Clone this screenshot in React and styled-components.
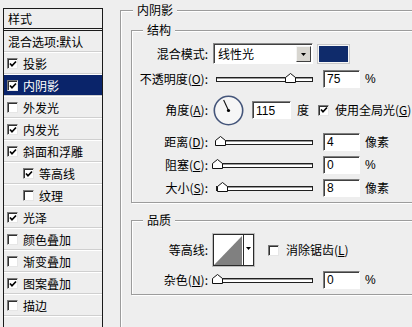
import React from 'react';
import styled, { createGlobalStyle } from 'styled-components';

const Global = createGlobalStyle`
  html, body { margin: 0; padding: 0; background: #eeeeee; }
  body {
    font-family: "Noto Sans CJK SC", "Liberation Sans", sans-serif;
    font-size: 12px;
    color: #000;
  }
  u { text-decoration: underline; text-underline-offset: 1px; }
`;

const Page = styled.div`
  width: 412px;
  height: 327px;
  overflow: hidden;
  display: flex;
  align-items: flex-start;
  background: #eeeeee;
`;

/* ---------- left list ---------- */
const Sidebar = styled.div`
  margin: 8px 0 0 3px;
  width: 100px;
  height: 319px;
  box-sizing: border-box;
  border-left: 1px solid #1a1a1a;
  border-right: 1px solid #1a1a1a;
  flex: none;
`;

const SideHeader = styled.div`
  height: 19px;
  border-top: 1px solid #1a1a1a;
  border-bottom: 3px double #1a1a1a;
  padding-left: 4px;
  display: flex;
  align-items: center;
  line-height: 1;
`;

const SideItem = styled.div`
  height: 21px;
  display: flex;
  align-items: center;
  gap: 5px;
  padding-left: ${p => p.$pl}px;
  border-bottom: 1px solid #ffffff;
  box-shadow: inset 0 -1px 0 #cfcfcf;
  background: ${p => (p.$active ? '#0a246a' : 'transparent')};
  color: ${p => (p.$active ? '#ffffff' : '#000000')};
  line-height: 1;
  white-space: nowrap;
`;

const Box = styled.span`
  width: 11px;
  height: 11px;
  box-sizing: border-box;
  background: #ffffff;
  border: 1px solid;
  border-color: #7a7a7a #e6e6e6 #e6e6e6 #7a7a7a;
  box-shadow: inset 1px 1px 0 #303030;
  display: inline-flex;
  align-items: center;
  justify-content: center;
  flex: none;
  margin-left: ${p => p.$ml || 0}px;
`;

const CheckBox = ({ checked, ml }) => (
  <Box $ml={ml}>
    {checked && (
      <svg width="8" height="8" viewBox="0 0 8 8">
        <path d="M1 3.5 L3 5.8 L7 1.5" fill="none" stroke="#000" strokeWidth="1.7" />
      </svg>
    )}
  </Box>
);

/* ---------- right panel ---------- */
const Main = styled.div`
  margin: 10px 0 0 17px;
  flex: none;
`;

const Group = styled.section`
  position: relative;
  box-sizing: border-box;
  border: 1px solid #9c9c9c;
  box-shadow: inset 1px 1px 0 #ffffff, 1px 1px 0 #ffffff;
  width: ${p => p.$w}px;
  min-height: ${p => p.$minh || 0}px;
  padding: ${p => p.$pad};
  margin-top: ${p => p.$mt || 0}px;
`;

const Legend = styled.span`
  position: absolute;
  top: -9px;
  left: ${p => p.$left}px;
  padding: 0 4px;
  background: #eeeeee;
  line-height: 16px;
`;

const Row = styled.div`
  display: grid;
  grid-template-columns: 76px auto;
  column-gap: 5px;
  align-items: center;
  height: ${p => p.$h}px;
  margin-top: ${p => p.$mt || 0}px;
`;

const Label = styled.span`
  justify-self: end;
  white-space: nowrap;
  line-height: 1;
`;

const Controls = styled.div`
  display: flex;
  align-items: center;
`;

const Select = styled.div`
  width: 100px;
  height: 21px;
  box-sizing: border-box;
  background: #ffffff;
  border: 1px solid;
  border-color: #8a8a8a #ffffff #ffffff #8a8a8a;
  box-shadow: inset 1px 1px 0 #404040;
  display: flex;
  align-items: stretch;
  padding: 2px 1px 1px 4px;
`;

const SelectText = styled.span`
  flex: 1;
  display: flex;
  align-items: center;
  line-height: 1;
`;

const DropBtn = styled.span`
  width: 15px;
  box-sizing: border-box;
  background: #d8d6d0;
  border: 1px solid;
  border-color: #f4f4f4 #404040 #404040 #f4f4f4;
  display: flex;
  align-items: center;
  justify-content: center;
`;

const Swatch = styled.span`
  width: 31px;
  height: 18px;
  box-sizing: border-box;
  margin-left: 5px;
  background: #0f2b6b;
  border: 1px solid #f7f7f7;
  outline: 1px solid #c8c8c8;
`;

const Slider = styled.div`
  position: relative;
  width: 100px;
  height: 19px;
  display: flex;
  align-items: center;
  justify-content: flex-end;
`;

const Track = styled.span`
  width: ${p => p.$w}px;
  height: 5px;
  margin-top: 2px;
  box-sizing: border-box;
  border: 1px solid #202020;
  background: #ffffff;
  box-shadow: inset 0 1px 0 #9a9a9a;
`;

const Thumb = styled.svg`
  position: absolute;
  top: 4px;
`;

const SliderCtl = ({ at, w = 97 }) => (
  <Slider>
    <Track $w={w} />
    <Thumb width="11" height="10" viewBox="0 0 11 10" style={{ left: at - 5.5 }}>
      <path d="M0.5 9.5 L0.5 4.5 L5.5 0.5 L10.5 4.5 L10.5 9.5 Z" fill="#ffffff" stroke="#111" />
    </Thumb>
  </Slider>
);

const Input = styled.span`
  width: ${p => p.$w || 37}px;
  height: 18px;
  box-sizing: border-box;
  margin-left: ${p => p.$ml ?? 10}px;
  background: #ffffff;
  border: 1px solid;
  border-color: #7f7f7f #ffffff #ffffff #7f7f7f;
  box-shadow: inset 1px 1px 0 #404040;
  padding: 1px 0 0 3px;
  font-family: "Liberation Sans", "DejaVu Sans", sans-serif;
  font-size: 12px;
  display: flex;
  align-items: center;
  line-height: 1;
`;

const Unit = styled.span`
  margin-left: ${p => p.$ml ?? 5}px;
  line-height: 1;
  white-space: nowrap;
  font-family: ${p => (p.$latin ? '"Liberation Sans", sans-serif' : 'inherit')};
`;

const Dial = () => {
  const a = (115 * Math.PI) / 180;
  const cx = 15.5, cy = 15.5, r = 11.5;
  return (
    <svg width="31" height="31" viewBox="0 0 31 31">
      <circle cx={cx} cy={cy} r="14.2" fill="#f6f6f6" stroke="#44557a" strokeWidth="1.6" />
      <line x1={cx} y1={cy} x2={cx + r * Math.cos(a)} y2={cy - r * Math.sin(a)} stroke="#111" strokeWidth="1.1" />
      <circle cx={cx} cy={cy} r="1.6" fill="#000" />
    </svg>
  );
};

const Contour = styled.div`
  width: 41px;
  height: 32px;
  box-sizing: border-box;
  border: 1px solid #2a2a2a;
  outline: 1px solid #bdbdbd;
  display: flex;
  background: #ffffff;
`;

const ContourDrop = styled.span`
  flex: 1;
  border-left: 1px solid #2a2a2a;
  display: flex;
  align-items: center;
  justify-content: center;
  padding-bottom: 3px;
`;

const Tri = () => (
  <svg width="5" height="3" viewBox="0 0 5 3">
    <path d="M0 0 L5 0 L2.5 3 Z" fill="#000" />
  </svg>
);

const sideItems = [
  { t: '投影', c: true },
  { t: '内阴影', c: true, active: true },
  { t: '外发光', c: false },
  { t: '内发光', c: true },
  { t: '斜面和浮雕', c: true },
  { t: '等高线', c: true, indent: true },
  { t: '纹理', c: false, indent: true },
  { t: '光泽', c: true },
  { t: '颜色叠加', c: false },
  { t: '渐变叠加', c: false },
  { t: '图案叠加', c: true },
  { t: '描边', c: false },
];

export default function App() {
  return (
    <Page>
      <Global />
      <Sidebar>
        <SideHeader>样式</SideHeader>
        <SideItem $pl={4}>混合选项:默认</SideItem>
        {sideItems.map(it => (
          <SideItem key={it.t} $pl={it.indent ? 19 : 3} $active={it.active}>
            <CheckBox checked={it.c} />
            <span>{it.t}</span>
          </SideItem>
        ))}
      </Sidebar>

      <Main>
        <Group $w={330} $minh={340} $pad="19px 0 0 10px">
          <Legend $left={12}>内阴影</Legend>

          <Group $w={300} $pad="12px 0 5px 0">
            <Legend $left={11}>结构</Legend>
            <Row $h={21}>
              <Label>混合模式:</Label>
              <Controls>
                <Select>
                  <SelectText>线性光</SelectText>
                  <DropBtn>
                    <Tri />
                  </DropBtn>
                </Select>
                <Swatch />
              </Controls>
            </Row>
            <Row $h={19} $mt={5}>
              <Label>不透明度(<u>O</u>):</Label>
              <Controls>
                <SliderCtl at={77} />
                <Input>75</Input>
                <Unit $latin>%</Unit>
              </Controls>
            </Row>
            <Row $h={32} $mt={6}>
              <Label>角度(<u>A</u>):</Label>
              <Controls>
                <Dial />
                <Input $w={39} $ml={8}>115</Input>
                <Unit $ml={6}>度</Unit>
                <CheckBox checked ml={9} />
                <Unit $ml={6}>使用全局光(<u>G</u>)</Unit>
              </Controls>
            </Row>
            <Row $h={19} $mt={6}>
              <Label>距离(<u>D</u>):</Label>
              <Controls>
                <SliderCtl at={7.5} />
                <Input>4</Input>
                <Unit>像素</Unit>
              </Controls>
            </Row>
            <Row $h={19} $mt={4}>
              <Label>阻塞(<u>C</u>):</Label>
              <Controls>
                <SliderCtl at={4} />
                <Input>0</Input>
                <Unit $latin>%</Unit>
              </Controls>
            </Row>
            <Row $h={19} $mt={4}>
              <Label>大小(<u>S</u>):</Label>
              <Controls>
                <SliderCtl at={9.5} />
                <Input>8</Input>
                <Unit>像素</Unit>
              </Controls>
            </Row>
          </Group>

          <Group $w={300} $mt={17} $pad="13px 0 5px 0">
            <Legend $left={11}>品质</Legend>
            <Row $h={32}>
              <Label>等高线:</Label>
              <Controls>
                <Contour>
                  <svg width="29" height="30" viewBox="0 0 29 30">
                    <polygon points="0,30 28,1 28,30" fill="#808080" />
                  </svg>
                  <ContourDrop>
                    <Tri />
                  </ContourDrop>
                </Contour>
                <CheckBox ml={14} />
                <Unit $ml={7}>消除锯齿(<u>L</u>)</Unit>
              </Controls>
            </Row>
            <Row $h={19} $mt={4}>
              <Label>杂色(<u>N</u>):</Label>
              <Controls>
                <SliderCtl at={4} />
                <Input>0</Input>
                <Unit $latin>%</Unit>
              </Controls>
            </Row>
          </Group>
        </Group>
      </Main>
    </Page>
  );
}
